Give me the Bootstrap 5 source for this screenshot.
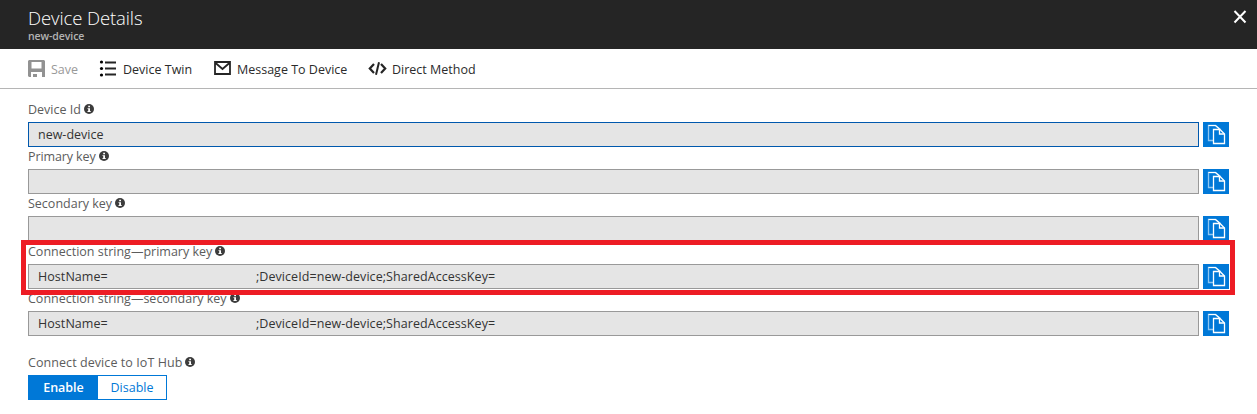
<!DOCTYPE html>
<html lang="en">
<head>
<meta charset="utf-8">
<meta name="viewport" content="width=device-width, initial-scale=1">
<title>Device Details</title>
<link href="https://cdn.jsdelivr.net/npm/bootstrap@5.3.0/dist/css/bootstrap.min.css" rel="stylesheet">
<style>
body{font-family:"Open Sans","Noto Sans",sans-serif;font-size:12.5px;line-height:18px;color:#2b2b2b;background:#fff;overflow:hidden}
svg{display:block;flex:none}
.blade-head{height:49px;background:#252525;color:#fff;padding:7px 10px 0 28px}
.blade-head h1{font-size:18.5px;font-weight:300;line-height:21px;letter-spacing:-.1px;color:#fff}
.sub-name{font-size:10.5px;font-weight:600;line-height:17px;color:#b4b4b4;letter-spacing:-.08px}
.close-x{background:none;border:0;padding:0;margin-top:3px;height:14px}
.commands{height:40px;border-bottom:1px solid #b5b5b5;padding-left:28px}
.cmd{background:none;border:0;padding:0;color:#2b2b2b;height:39px;padding-top:2px}
.cmd svg{position:relative;top:-1px}
.cmd:disabled{color:#999}
.save-t{margin-left:6px}
.blade-body{padding:11px 28px 0}
.lbl{height:22px;color:#5c5c5c;line-height:19px;gap:3px}
.field-row{gap:4px}
.val{height:25px;border:1px solid #999;background:#e5e5e5;padding:0 9px;line-height:23px;color:#333;white-space:pre}
.val.active{border-color:#0058ad}
.conn{letter-spacing:.06px}
.host-part{width:218px}
.copy-btn{width:26px;height:25px;padding:0;border:0;border-radius:0;background:#0078d7}
.marked::after{content:"";position:absolute;left:-7px;right:-6px;top:-1px;bottom:-6px;border:5px solid #ed1c24}
.tog{height:25px;width:139px;border:1px solid #0078d7}
.tog button{background:#fff;color:#0078d7;border:0;padding:0;line-height:23px}
.tog .on{background:#0078d7;color:#fff;width:69px;font-weight:600}
.tog .off{width:68px}
</style>
</head>
<body>
<svg class="d-none">
  <symbol id="info" viewBox="0 0 10 10"><circle cx="5" cy="5" r="5" fill="#3c3c3c"/><path d="M3.500 4.200H6V7h.7v1H3.500V7H4.200V5H3.500zM4.200 1.800H6v1.500H4.200z" fill="#fff"/></symbol>
  <symbol id="copy" viewBox="0 0 26 25"><path d="M10.500 18.500h-5v-15h7l5 4" fill="none" stroke="#8cc6f3" stroke-width="1.300"/><path d="M5.500 3.500h7l4 3.500" fill="none" stroke="#fff" stroke-width="1.100"/><path d="M10.500 7.500h6.500l4.500 4.500v9.500h-11z" fill="#0078d7" stroke="#fff" stroke-width="1.300"/><path d="M16.500 7.500v4.500h5" fill="none" stroke="#fff" stroke-width="1.300"/></symbol>
</svg>
<header class="blade-head d-flex justify-content-between align-items-start">
  <div><h1 class="m-0"><span>Device Details</span></h1><div class="sub-name">new-device</div></div>
  <button class="close-x" aria-label="Close"><svg width="14" height="14" viewBox="0 0 14 14"><path d="M1.500 1l11 11.500M12.500 1l-11 11.500" stroke="#fff" stroke-width="2"/></svg></button>
</header>
<nav class="commands d-flex">
  <button class="cmd d-flex align-items-center" disabled style="width:71px">
    <svg width="17" height="17" viewBox="0 0 17 17"><path d="M1 0h15l1 1v16h-3v-5H3v5H1l-1-1V1z" fill="#929292"/><path d="M3.500 2h10v6.500h-10z" fill="#fff"/><path d="M5 14h4v3H5z" fill="#929292"/></svg>
    <span class="save-t">Save</span></button>
  <button class="cmd d-flex align-items-center" style="width:115px">
    <svg width="18" height="17" viewBox="0 0 18 17"><path d="M6 2.500h11M6 8.500h11M6 14.500h11" stroke="#252525" stroke-width="2"/><circle cx="2.500" cy="2" r="1.600"/><circle cx="2.500" cy="8.500" r="1.600"/><circle cx="2.500" cy="15" r="1.600"/></svg>
    <span style="margin-left:6px">Device Twin</span></button>
  <button class="cmd d-flex align-items-center" style="width:154px">
    <svg width="17" height="14" viewBox="0 0 17 14" style="margin-top:-2px"><path d="M1 1h15v12H1zM1 1.500l7.500 6.500L16 1.500" fill="none" stroke="#252525" stroke-width="1.800"/></svg>
    <span style="margin-left:6px">Message To Device</span></button>
  <button class="cmd d-flex align-items-center">
    <svg width="19" height="13" viewBox="0 0 19 13"><path d="M6 2L1.800 6.500 6 11M13 2l4.200 4.500L13 11" fill="none" stroke="#252525" stroke-width="2.200"/><path d="M11 .3L8 12.700" stroke="#252525" stroke-width="2"/></svg>
    <span style="margin-left:5px">Direct Method</span></button>
</nav>
<main class="blade-body">
  <section><div class="lbl d-flex"><span>Device Id</span><svg width="10" height="10" class="mt-1"><use href="#info"/></svg></div>
    <div class="field-row d-flex"><div class="val active flex-grow-1">new-device</div><button class="copy-btn btn"><svg width="26" height="25"><use href="#copy"/></svg></button></div></section>
  <section><div class="lbl d-flex"><span style="letter-spacing:-.1px">Primary key</span><svg width="10" height="10" class="mt-1"><use href="#info"/></svg></div>
    <div class="field-row d-flex"><div class="val flex-grow-1"></div><button class="copy-btn btn"><svg width="26" height="25"><use href="#copy"/></svg></button></div></section>
  <section><div class="lbl d-flex"><span>Secondary key</span><svg width="10" height="10" class="mt-1"><use href="#info"/></svg></div>
    <div class="field-row d-flex"><div class="val flex-grow-1"></div><button class="copy-btn btn"><svg width="26" height="25"><use href="#copy"/></svg></button></div></section>
  <section class="marked position-relative z-1"><div class="lbl d-flex" style="height:23px;padding-top:1px"><span>Connection string—primary key</span><svg width="10" height="10" class="mt-1"><use href="#info"/></svg></div>
    <div class="field-row d-flex"><div class="val conn d-flex flex-grow-1"><span class="host-part">HostName=</span><span>;DeviceId=new-device;SharedAccessKey=</span></div><button class="copy-btn btn"><svg width="26" height="25"><use href="#copy"/></svg></button></div></section>
  <section><div class="lbl d-flex"><span>Connection string—secondary key</span><svg width="10" height="10" class="mt-1"><use href="#info"/></svg></div>
    <div class="field-row d-flex"><div class="val conn d-flex flex-grow-1"><span class="host-part">HostName=</span><span>;DeviceId=new-device;SharedAccessKey=</span></div><button class="copy-btn btn"><svg width="26" height="25"><use href="#copy"/></svg></button></div></section>
  <section style="margin-top:17px"><div class="lbl d-flex"><span style="letter-spacing:.07px">Connect device to IoT Hub</span><svg width="10" height="10" class="mt-1"><use href="#info"/></svg></div>
    <div class="tog d-flex"><button class="on">Enable</button><button class="off">Disable</button></div></section>
</main>
<script src="https://cdn.jsdelivr.net/npm/bootstrap@5.3.0/dist/js/bootstrap.bundle.min.js"></script>
</body>
</html>
